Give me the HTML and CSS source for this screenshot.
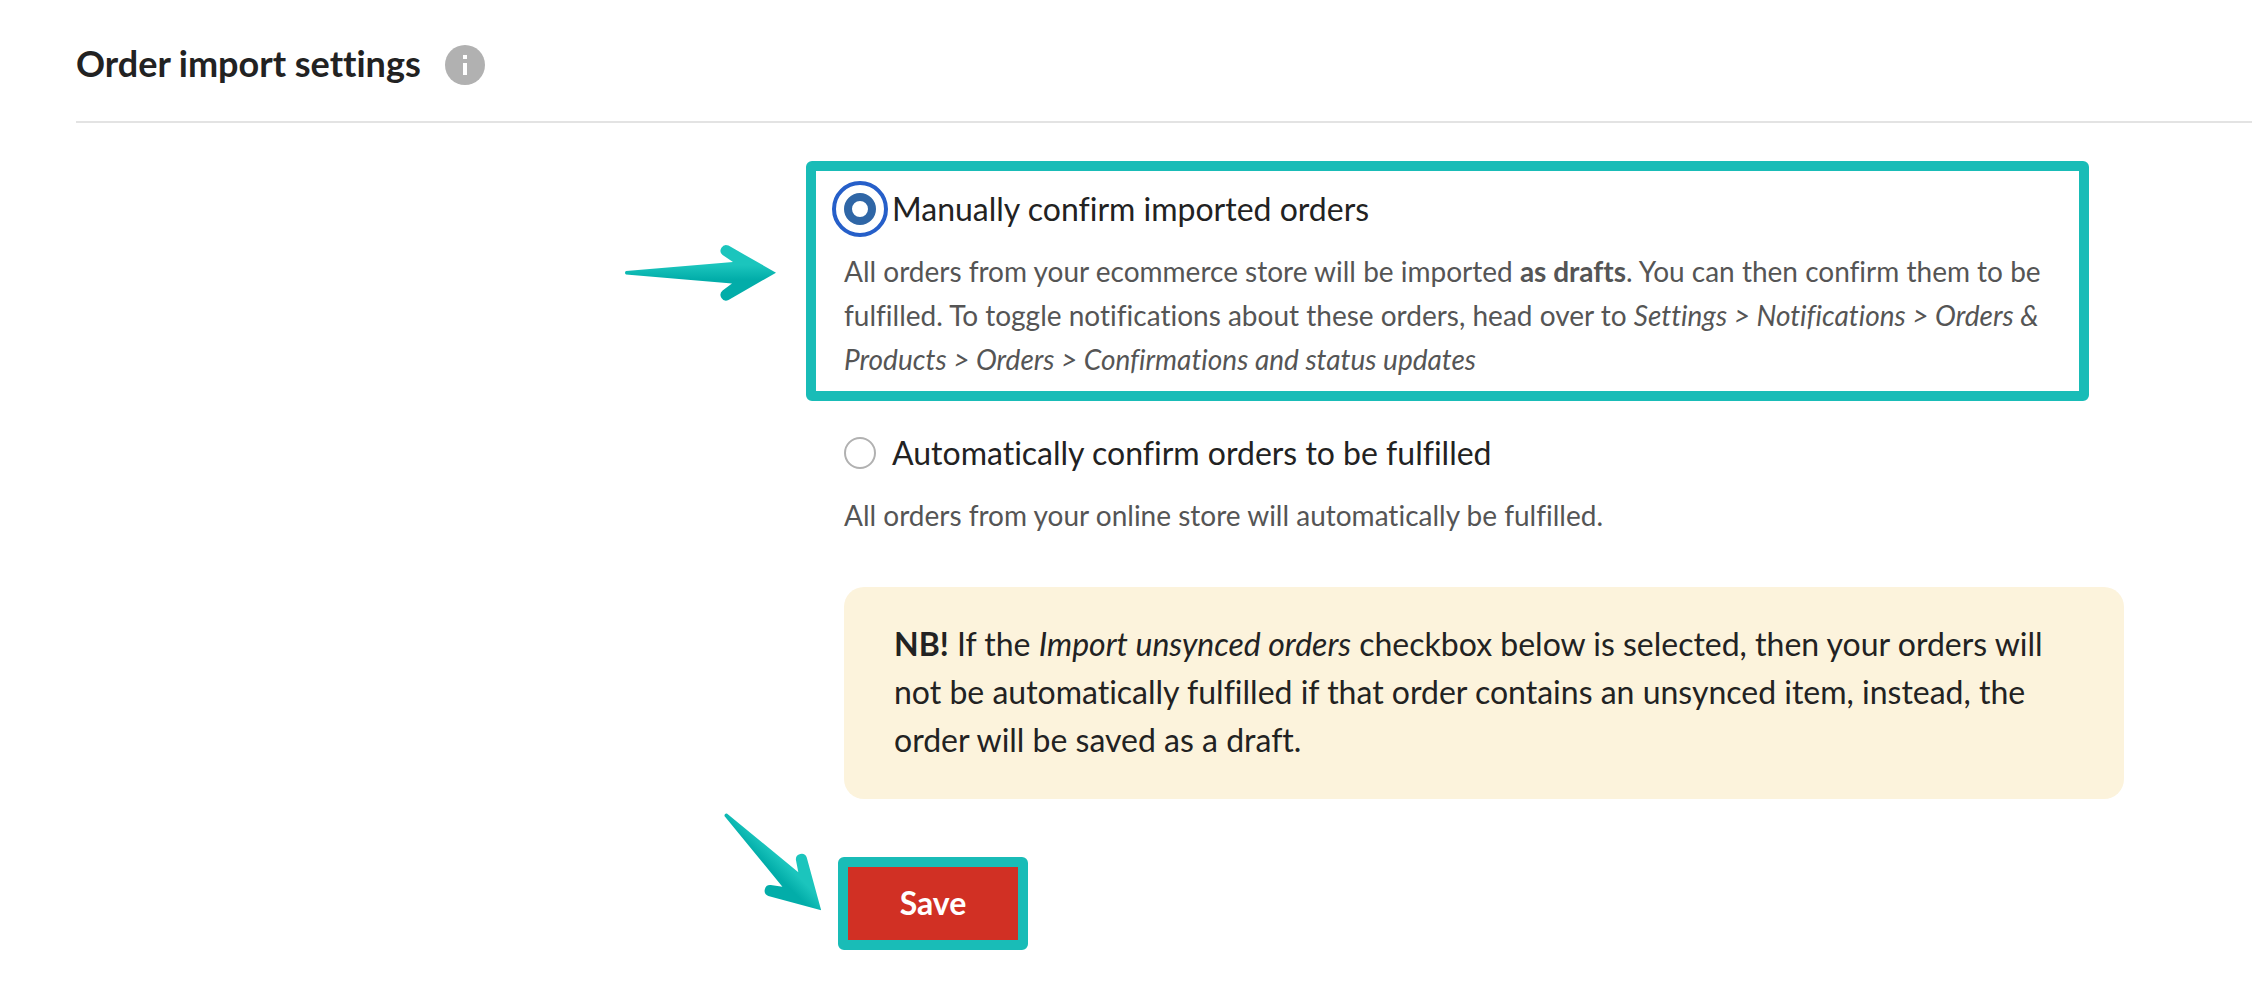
FILE: index.html
```html
<!DOCTYPE html>
<html lang="en">
    <head>
        <meta charset="UTF-8" />
        <meta name="viewport" content="width=device-width, initial-scale=1.0" />
        <title>Order import settings</title>

        <link rel="stylesheet" href="styles.css">
    </head>
    <body>
        <header class="section-header">
            <h2>Order import settings</h2>
            <svg class="info-icon" viewBox="0 0 40 40" aria-hidden="true">
                <circle cx="20" cy="20" r="20" fill="#b1b1b1" />
                <path d="M18 10h4v4h-4zM18 18h4v12h-4z" fill="#fff" />
            </svg>
        </header>

        <form class="settings">
            <div class="settings-body">
                <div class="option highlight">
                    <svg class="arrow arrow-right" viewBox="0 0 152 58" aria-hidden="true">
                        <defs>
                            <linearGradient id="teal" x1="0" y1="0" x2="0" y2="1">
                                <stop offset="0.36" stop-color="#1bc5bd" />
                                <stop offset="0.62" stop-color="#02ada9" />
                            </linearGradient>
                        </defs>
                        <path
                            d="M1 27L108 18L97.6 11A5.6 5.6 0 0 1 103.5 1.6L151 28.7L103.5 56A5.6 5.6 0 0 1 97.6 46.6L107 39.5L1 30.5Q-1 28.7 1 27Z"
                            fill="url(#teal)"
                        />
                    </svg>
                    <div class="option-label">
                        <input type="radio" id="manual" name="confirm" class="focused" checked />
                        <label for="manual">Manually confirm imported orders</label>
                    </div>
                    <p>
                        All orders from your ecommerce store will be imported
                        <b>as drafts</b>. You can then confirm them to be
                        fulfilled. To toggle notifications about these orders,
                        head over to
                        <i>Settings &gt; Notifications &gt; Orders &amp;
                        Products &gt; Orders &gt; Confirmations and status
                        updates</i>
                    </p>
                </div>

                <div class="option">
                    <div class="option-label">
                        <input type="radio" id="auto" name="confirm" />
                        <label for="auto">Automatically confirm orders to be fulfilled</label>
                    </div>
                    <p>
                        All orders from your online store will automatically be
                        fulfilled.
                    </p>
                </div>

                <div class="notice">
                    <b>NB!</b> If the <i>Import unsynced orders</i> checkbox
                    below is selected, then your orders will not be
                    automatically fulfilled if that order contains an unsynced
                    item, instead, the order will be saved as a draft.
                </div>

                <div class="actions">
                    <svg class="arrow arrow-down" viewBox="0 0 104 104" aria-hidden="true">
                        <path
                            transform="translate(5 4) rotate(45) translate(0 -28.7)"
                            d="M1 27L93 18L82.6 11A5.6 5.6 0 0 1 88.5 1.6L136 28.7L88.5 56A5.6 5.6 0 0 1 82.6 46.6L92 39.5L1 30.5Q-1 28.7 1 27Z"
                            fill="url(#teal)"
                        />
                    </svg>
                    <button type="button" class="save-btn">Save</button>
                </div>
            </div>
        </form>
    </body>
</html>
```
FILE: styles.css
```css
* {
    box-sizing: border-box;
}
body {
    margin: 0;
    padding-left: 76px;
    background: white;
    color: #222;
    font-family: Lato, 'Liberation Sans', sans-serif;
    font-size: 32px;
    font-variant-ligatures: none;
    line-height: 44px;
}
h2,
p {
    margin: 0;
}
.section-header {
    display: flex;
    align-items: center;
    gap: 24px;
    padding: 41px 0 32px;
    border-bottom: 2px solid #e3e3e3;
}
h2 {
    padding-bottom: 4px;
    font-size: 36px;
    line-height: 44px;
}
.info-icon {
    width: 40px;
    height: 40px;
}
.settings {
    display: grid;
    grid-template-columns: 6fr 10fr 1fr;
    padding: 38px 0 48px;
}
.settings-body {
    grid-column: 2;
}
.option {
    position: relative;
}
.option p {
    margin-top: 18px;
    color: #555;
    font-size: 28px;
}
.option-label {
    display: flex;
    align-items: center;
    gap: 16px;
}
.highlight {
    margin: 0 35px 30px -38px;
    padding: 16px 24px 10px 28px;
    border: 10px solid #19bcb7;
    border-radius: 6px;
}
input[type='radio'] {
    appearance: none;
    flex: none;
    width: 32px;
    height: 32px;
    margin: 0;
    background: white;
    border: 2px solid #b1b1b1;
    border-radius: 50%;
}
input[type='radio']:checked {
    border: 8px solid #2f66a6;
}
input[type='radio'].focused {
    outline: 4px solid #265fc9;
    outline-offset: 8px;
}
.notice {
    margin-top: 50px;
    padding: 33px 50px 35px;
    background: #fcf3dc;
    border-radius: 20px;
    line-height: 48px;
}
.actions {
    position: relative;
    margin: 58px 0 0 -6px;
}
.save-btn {
    display: block;
    min-width: 190px;
    padding: 14px 48px 15px;
    background: #d13024;
    color: white;
    font-family: inherit;
    font-size: 32px;
    font-weight: bold;
    line-height: 44px;
    border: 10px solid #19bcb7;
    border-radius: 6px;
    cursor: pointer;
}
/* arrows sit outside the boxes they point at */
.arrow {
    position: absolute;
}
.arrow-right {
    top: 73px;
    left: -191px;
    width: 152px;
    height: 58px;
}
.arrow-down {
    top: -47px;
    left: -118px;
    width: 104px;
    height: 104px;
}
```
